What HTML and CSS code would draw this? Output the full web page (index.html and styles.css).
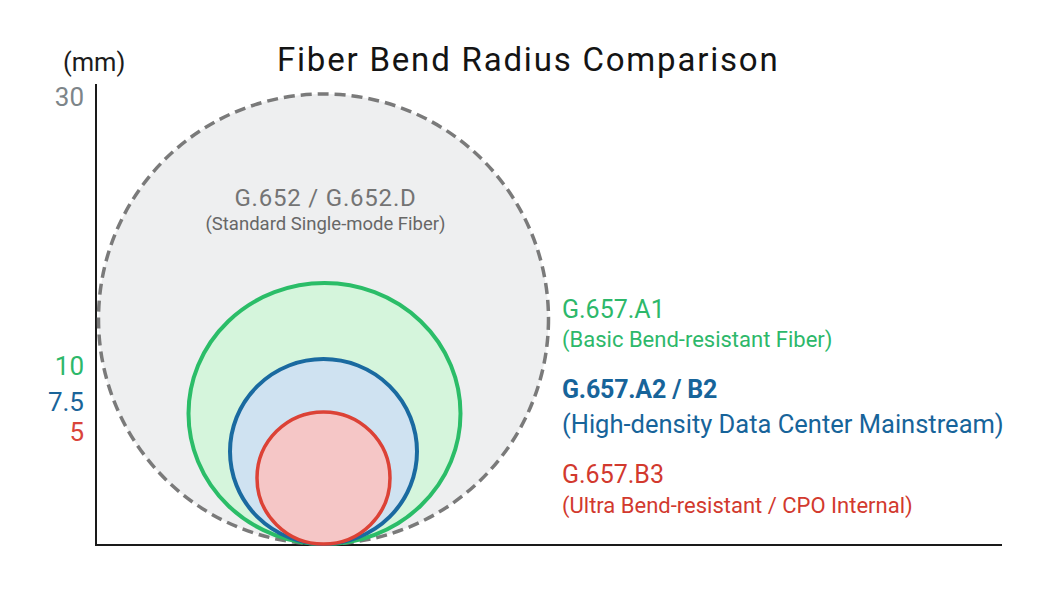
FILE: index.html
```html
<!DOCTYPE html>
<html lang="en">
<head>
<meta charset="utf-8">
<title>Fiber Bend Radius Comparison</title>
<link rel="stylesheet" href="styles.css">
</head>
<body>
<div class="page">
  <header class="header">
    <span class="unit">(mm)</span>
    <h1 class="title">Fiber Bend Radius Comparison</h1>
  </header>
  <div class="chart">
    <div class="yaxis">
      <span class="tick tick--gray" style="top:-2px">30</span>
      <span class="tick tick--green" style="top:267px">10</span>
      <span class="tick tick--blue" style="top:303px">7.5</span>
      <span class="tick tick--red" style="top:333px">5</span>
    </div>
    <div class="area">
      <div class="plot">
        <svg class="circles" width="460" height="460" viewBox="0 0 460 460">
          <circle cx="226.5" cy="235" r="225" fill="#eeeff0" stroke="#7a7a7a" stroke-width="3.5" stroke-dasharray="11 6"/>
          <ellipse cx="227.5" cy="329.5" rx="136" ry="130.5" fill="#d5f5dc" stroke="#2bbd68" stroke-width="4"/>
          <ellipse cx="226.5" cy="367.5" rx="93.5" ry="92.5" fill="#cfe2f1" stroke="#1a6aa0" stroke-width="4"/>
          <ellipse cx="226.5" cy="394" rx="66.5" ry="66" fill="#f5c6c6" stroke="#dc4236" stroke-width="3.5"/>
        </svg>
        <div class="center-label">
          <div class="center-title">G.652 / G.652.D</div>
          <div class="center-sub">(Standard Single-mode Fiber)</div>
        </div>
      </div>
      <div class="legend">
        <div class="legend-item legend-item--green">
          <div class="legend-title">G.657.A1</div>
          <div class="legend-sub">(Basic Bend-resistant Fiber)</div>
        </div>
        <div class="legend-item legend-item--blue">
          <div class="legend-title legend-title--bold">G.657.A2 / B2</div>
          <div class="legend-sub legend-sub--large">(High-density Data Center Mainstream)</div>
        </div>
        <div class="legend-item legend-item--red">
          <div class="legend-title">G.657.B3</div>
          <div class="legend-sub legend-sub--tight">(Ultra Bend-resistant / CPO Internal)</div>
        </div>
      </div>
    </div>
  </div>
</div>
</body>
</html>
```
FILE: styles.css
```css
html, body {
  margin: 0;
  padding: 0;
  background: #ffffff;
}

.page {
  width: 1059px;
  height: 605px;
  font-family: Roboto, "Noto Sans", "Liberation Sans", sans-serif;
  overflow: hidden;
}

.header {
  display: flex;
  align-items: baseline;
  height: 84px;
  box-sizing: border-box;
  padding-top: 40px;
  padding-left: 63px;
}

.unit {
  width: 214px;
  font-size: 25.5px;
  line-height: 40px;
  color: #1c1c1c;
}

.title {
  margin: 0;
  font-size: 33px;
  font-weight: 400;
  line-height: 40px;
  letter-spacing: 1.8px;
  color: #141414;
}

.chart {
  display: flex;
}

.yaxis {
  position: relative;
  width: 95px;
}

.tick {
  position: absolute;
  right: 11px;
  font-size: 26px;
  line-height: 30px;
}

.tick--gray { color: #7d8589; }
.tick--green { color: #2db86a; }
.tick--blue { color: #1a6499; }
.tick--red { color: #d9443a; }

.area {
  display: flex;
  width: 905px;
  height: 460px;
  border-left: 2px solid #1a1a1a;
  border-bottom: 2px solid #1a1a1a;
}

.plot {
  position: relative;
  width: 460px;
  height: 460px;
  flex: none;
}

.circles {
  display: block;
  overflow: visible;
}

.center-label {
  position: absolute;
  top: 99px;
  left: 0;
  width: 457px;
  text-align: center;
  white-space: nowrap;
}

.center-title {
  font-size: 24px;
  line-height: 30px;
  letter-spacing: 0.8px;
  color: #747474;
}

.center-sub {
  font-size: 18.5px;
  line-height: 22px;
  color: #676767;
}

.legend {
  display: flex;
  flex-direction: column;
  flex: none;
  gap: 20px;
  padding-top: 211px;
  margin-left: 5px;
  white-space: nowrap;
}

.legend-item--green { color: #2db86a; }
.legend-item--blue { color: #17649a; }
.legend-item--red { color: #d2392e; margin-top: 1px; }

.legend-title {
  font-size: 25px;
  line-height: 30px;
}

.legend-title--bold {
  font-weight: 700;
  letter-spacing: -0.2px;
}

.legend-sub {
  font-size: 22px;
  line-height: 30px;
}

.legend-sub--large {
  margin-top: 4px;
  font-size: 25.5px;
}

.legend-sub--tight {
  margin-top: 1px;
}
```
